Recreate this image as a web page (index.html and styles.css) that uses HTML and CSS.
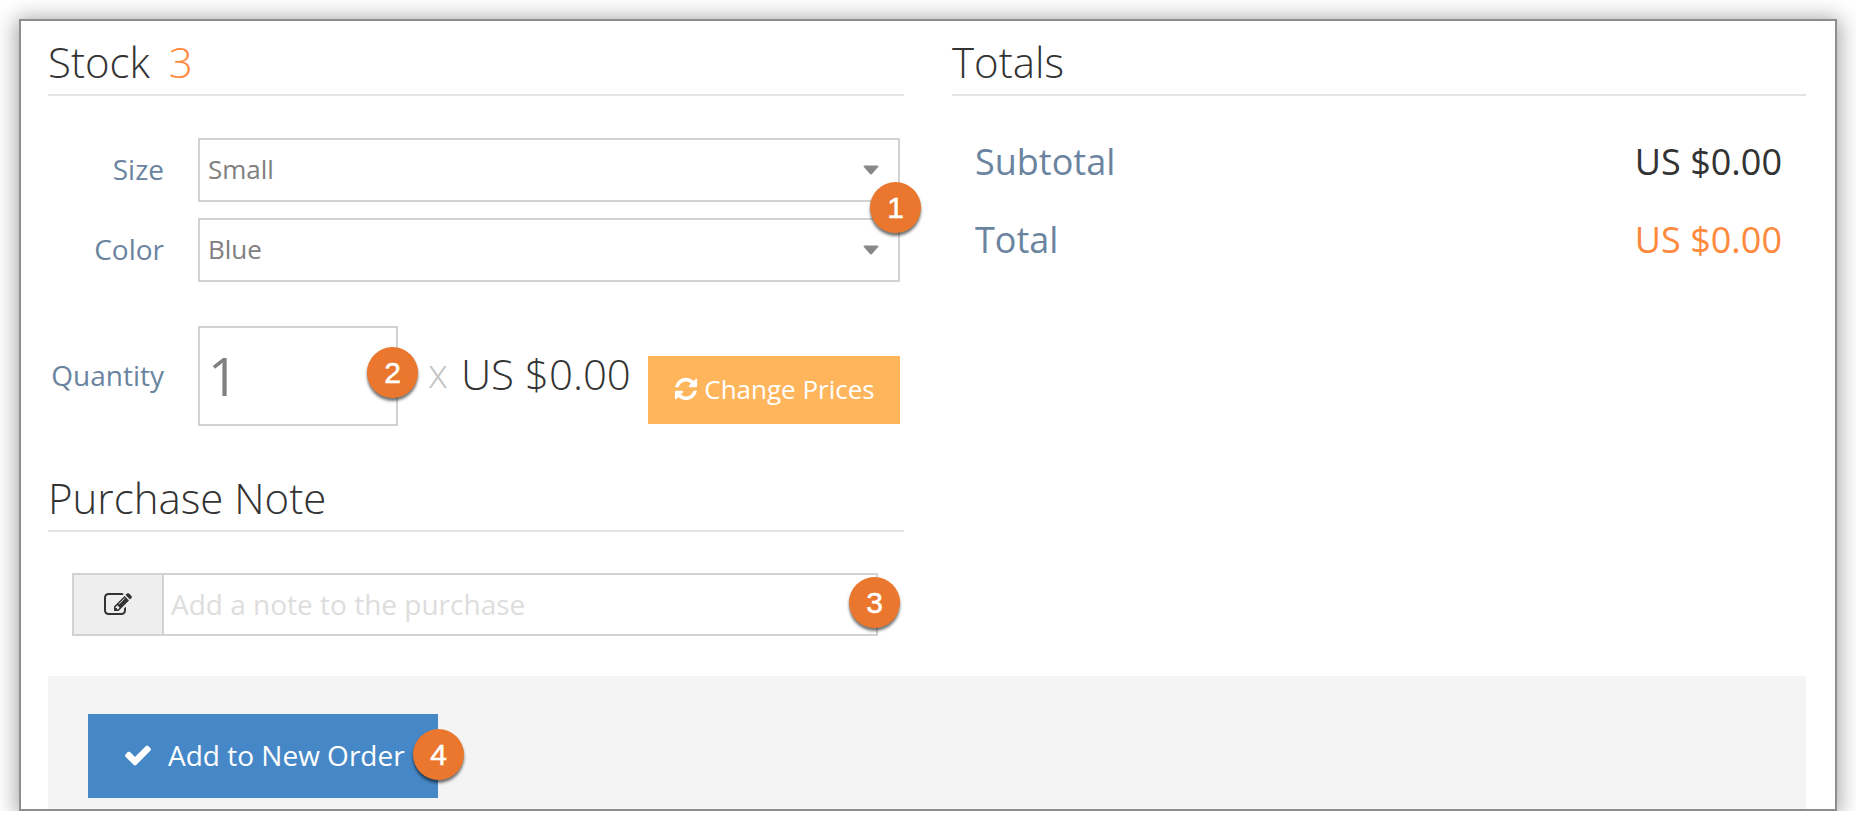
FILE: index.html
```html
<!DOCTYPE html>
<html lang="en">
<head>
<meta charset="UTF-8">
<meta name="viewport" content="width=device-width, initial-scale=1.0">
<title>Stock and Totals</title>
<link rel="stylesheet" href="styles.css">
</head>
<body>
    <div class="window">
        <div class="columns">
            <div class="col colLeft">
                <h2 class="heading">Stock <span class="stockCount">3</span></h2>
                <div class="options">
                    <div class="row">
                        <label class="rowLabel" for="size">Size</label>
                        <div class="selectWrap">
                            <select id="size" class="control"><option>Small</option></select>
                            <svg class="caret" viewBox="0 0 16 10"><path d="M1.5 0.5h13q1.5 0 0.8 1.3l-6 7q-1.3 1.2-2.600 0l-6-7q-0.700-1.300 0.800-1.300z"/></svg>
                        </div>
                    </div>
                    <div class="row">
                        <label class="rowLabel" for="color">Color</label>
                        <div class="selectWrap">
                            <select id="color" class="control"><option>Blue</option></select>
                            <svg class="caret" viewBox="0 0 16 10"><path d="M1.5 0.5h13q1.5 0 0.8 1.3l-6 7q-1.3 1.2-2.600 0l-6-7q-0.700-1.300 0.800-1.300z"/></svg>
                            <span class="badge badgeOne">1</span>
                        </div>
                    </div>
                </div>
                <div class="row qtyRow">
                    <label class="rowLabel" for="qty">Quantity</label>
                    <div class="qtyWrap">
                        <input id="qty" class="qtyInput" type="text" value="1">
                        <span class="badge badgeTwo">2</span>
                    </div>
                    <span class="times">x</span>
                    <span class="unitPrice">US $0.00</span>
                    <button class="changeBtn">
                        <svg class="btnIcon" viewBox="0 0 1792 1792"><path d="M1639 1056q0 5-1 7-64 268-268 434.5t-478 166.5q-146 0-282.500-55t-243.500-157l-129 129q-19 19-45 19t-45-19-19-45v-448q0-26 19-45t45-19h448q26 0 45 19t19 45-19 45l-137 137q71 66 161 102t187 36q134 0 250-65t186-179q11-17 53-117 8-23 30-23h192q13 0 22.500 9.500t9.500 22.500zm25-800v448q0 26-19 45t-45 19h-448q-26 0-45-19t-19-45 19-45l138-138q-148-137-349-137-134 0-250 65t-186 179q-11 17-53 117-8 23-30 23h-199q-13 0-22.500-9.500t-9.500-22.500v-7q65-268 270-434.500t480-166.500q146 0 284 55.500t245 156.500l130-129q19-19 45-19t45 19 19 45z"/></svg>
                        Change Prices
                    </button>
                </div>
                <h2 class="heading noteHeading">Purchase Note</h2>
                <div class="noteGroup">
                    <span class="noteAddon">
                        <svg class="noteIcon" viewBox="0 0 1792 1792"><path d="M888 1184l116-116-152-152-116 116v56h96v96h56zm440-720q-16-16-33 1l-350 350q-17 17-1 33t33-1l350-350q17-17 1-33zm80 594v190q0 119-84.500 203.500t-203.500 84.500h-832q-119 0-203.500-84.500t-84.500-203.500v-832q0-119 84.500-203.500t203.500-84.500h832q63 0 117 25 15 7 18 23 3 17-9 29l-49 49q-14 14-32 8-23-6-45-6h-832q-66 0-113 47t-47 113v832q0 66 47 113t113 47h832q66 0 113-47t47-113v-126q0-13 9-22l64-64q15-15 35-7t20 29zm-96-738l288 288-672 672h-288v-288zm444 132l-92 92-288-288 92-92q28-28 68-28t68 28l152 152q28 28 28 68t-28 68z"/></svg>
                    </span>
                    <input class="noteInput" type="text" placeholder="Add a note to the purchase">
                    <span class="badge badgeThree">3</span>
                </div>
            </div>
            <div class="col">
                <h2 class="heading">Totals</h2>
                <div class="totals">
                    <div class="totalRow">
                        <span class="totalLabel">Subtotal</span>
                        <span>US $0.00</span>
                    </div>
                    <div class="totalRow">
                        <span class="totalLabel">Total</span>
                        <span class="grandTotal">US $0.00</span>
                    </div>
                </div>
            </div>
        </div>
        <div class="footerBar">
            <button class="addBtn">
                <svg class="addIcon" viewBox="0 0 1792 1792"><path d="M1671 566q0 40-28 68l-724 724-136 136q-28 28-68 28t-68-28l-136-136-362-362q-28-28-28-68t28-68l136-136q28-28 68-28t68 28l294 295 656-657q28-28 68-28t68 28l136 136q28 28 28 68z"/></svg>
                Add to New Order
                <span class="badge badgeFour">4</span>
            </button>
        </div>
    </div>
</body>
</html>
```

FILE: styles.css
```css
body {
  margin: 0;
  background-color: #fff;
  font-family: "Open Sans", sans-serif;
  color: #333;
}
.window {
  box-sizing: border-box;
  height: 792px;
  margin: 19px 19px 0 19px;
  padding: 10px 29px 0 27px;
  background-color: #fff;
  border: 2px solid #8e8e8e;
  box-shadow: 0 2px 20px 3px rgba(0, 0, 0, 0.35);
}
.columns {
  display: flex;
  gap: 48px;
}
.col {
  flex: 1;
}
.colLeft {
  flex: none;
  width: 856px;
}
.heading {
  margin: 0;
  padding: 2px 0 3px;
  border-bottom: 2px solid #e5e5e5;
  font-size: 42px;
  font-weight: 300;
  line-height: 58px;
}
.stockCount {
  margin-left: 8px;
  color: #ff8a3d;
}
.options {
  display: grid;
  gap: 16px;
  margin-top: 42px;
}
.row {
  display: flex;
  align-items: center;
  padding-right: 4px;
}
.rowLabel {
  flex: none;
  width: 116px;
  margin-right: 34px;
  margin-bottom: 2px;
  text-align: right;
  font-size: 28px;
  color: #6a84a0;
}
.selectWrap {
  position: relative;
  flex: 1;
}
.control {
  display: block;
  box-sizing: border-box;
  width: 100%;
  height: 64px;
  padding: 0 8px 2px;
  appearance: none;
  background-color: #fff;
  border: 2px solid #d2d2d2;
  border-radius: 0;
  font-family: "Open Sans", sans-serif;
  font-size: 26px;
  color: #808080;
}
.caret {
  position: absolute;
  top: 27px;
  right: 21px;
  width: 16px;
  height: 10px;
  fill: #888;
}
.badge {
  position: absolute;
  width: 51px;
  height: 51px;
  border-radius: 50%;
  display: flex;
  align-items: center;
  justify-content: center;
  background-color: #ea772d;
  box-shadow: 0 3px 3px rgba(0, 0, 0, 0.55);
  font-family: "Liberation Sans", sans-serif;
  font-size: 30px;
  font-weight: 400;
  color: #fff;
  -webkit-text-stroke: 0.5px #fff;
}
.badgeOne {
  top: -36px;
  right: -21px;
}
.badgeTwo {
  top: 21px;
  right: -20px;
}
.badgeThree {
  top: 2px;
  right: -24px;
}
.badgeFour {
  top: 15px;
  right: -26px;
}
.qtyRow {
  margin-top: 44px;
}
.qtyWrap {
  position: relative;
  flex: none;
}
.qtyInput {
  display: block;
  box-sizing: border-box;
  width: 200px;
  height: 100px;
  padding: 0 8px 2px;
  border: 2px solid #d2d2d2;
  border-radius: 0;
  font-family: "Open Sans", sans-serif;
  font-size: 53px;
  font-weight: 400;
  color: #808080;
}
.times {
  margin: 0 13px 6px 30px;
  font-size: 40px;
  font-weight: 300;
  line-height: 60px;
  color: #c4c4c4;
}
.unitPrice {
  flex: 1;
  margin-bottom: 4px;
  font-size: 42px;
  font-weight: 300;
  line-height: 60px;
}
.changeBtn {
  flex: none;
  display: flex;
  align-items: center;
  justify-content: center;
  gap: 5px;
  width: 252px;
  height: 68px;
  margin-top: 28px;
  padding: 0 0 2px;
  background-color: #ffb55c;
  border: none;
  font-family: "Open Sans", sans-serif;
  font-size: 26px;
  color: #fff;
}
.btnIcon {
  width: 26px;
  height: 26px;
  fill: #fff;
}
.noteHeading {
  margin-top: 41px;
}
.noteGroup {
  position: relative;
  display: flex;
  box-sizing: border-box;
  height: 63px;
  margin: 41px 26px 0 24px;
  border: 2px solid #d2d2d2;
}
.noteAddon {
  flex: none;
  display: flex;
  align-items: center;
  justify-content: center;
  width: 88px;
  background-color: #eee;
  border-right: 2px solid #d2d2d2;
}
.noteIcon {
  width: 28px;
  height: 28px;
  fill: #333;
}
.noteInput {
  flex: 1;
  padding: 0 7px 2px;
  border: none;
  font-family: "Open Sans", sans-serif;
  font-size: 28px;
}
.noteInput::placeholder {
  color: #ddd;
  opacity: 1;
}
.totals {
  margin-top: 27px;
  padding: 0 24px 0 23px;
}
.totalRow {
  display: flex;
  justify-content: space-between;
  font-size: 36px;
  line-height: 78px;
}
.totalLabel {
  color: #6a84a0;
}
.grandTotal {
  color: #ff8a3d;
}
.footerBar {
  box-sizing: border-box;
  height: 133px;
  margin-top: 40px;
  padding: 38px 0 0 40px;
  background-color: #f4f4f4;
}
.addBtn {
  position: relative;
  display: flex;
  align-items: center;
  box-sizing: border-box;
  width: 350px;
  height: 84px;
  padding: 0 0 2px 35px;
  gap: 15px;
  background-color: #4688c7;
  border: none;
  font-family: "Open Sans", sans-serif;
  font-size: 28px;
  color: #fff;
}
.addIcon {
  width: 30px;
  height: 30px;
  fill: #fff;
}
```
